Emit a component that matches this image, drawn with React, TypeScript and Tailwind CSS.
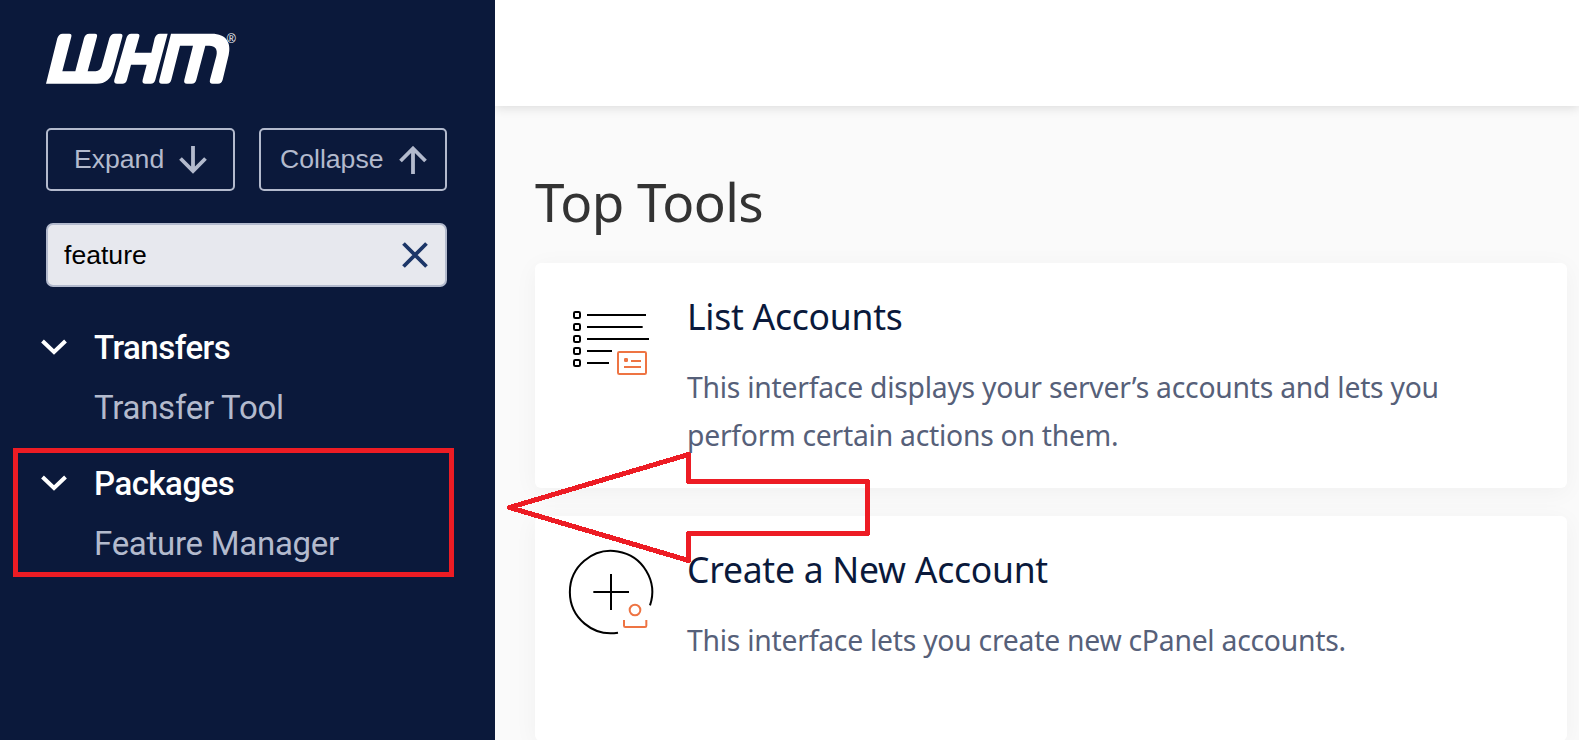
import type { ReactNode } from "react";

const menu = [
  { title: "Transfers", item: "Transfer Tool" },
  { title: "Packages", item: "Feature Manager" },
];

function Logo() {
  return (
    <svg
      className="h-[52px] w-[192px] overflow-visible"
      viewBox="48 40 576 156"
      fill="#fff"
      aria-label="WHM"
    >
      <path d="M48 192L82 56Q86 42 98 42H118Q126 42 124 51L97 155H136L162 56Q165 42 178 42H195Q203 42 201 51L173 155H197Q211 154 215 140L238 56Q242 42 254 42H271Q279 42 277 51L250 150C243 178 226 192 200 192Z" />
      <path d="M289 56Q292 42 304 42H322Q330 42 328 51L314 99H364L374 56Q378 42 390 42H413L376 180Q373 192 362 192H346Q335 192 338 180L350 135H303L291 180Q288 192 277 192H262Q250 192 253 180Z" />
      <path d="M423 42H545C590 42 604 70 596 106L578 180Q575 192 564 192H548Q537 192 540 180L559 109C564 88 555 78 538 78H526L499 180Q496 192 485 192H471Q460 192 463 180L489 78H450L424 180Q421 192 410 192H396Q385 192 388 180Z" />
      <text
        x="590"
        y="71"
        fontSize="37"
        fontFamily="Liberation Sans, sans-serif"
      >
        ®
      </text>
    </svg>
  );
}

function ListIcon() {
  const rights = [288, 278, 297, 186, 177];
  return (
    <svg className="mt-1.5 size-[84px] shrink-0" viewBox="57 21 252 252" fill="none">
      {rights.map((right, i) => (
        <g key={right} stroke="#000" strokeWidth="6">
          <rect x="72" y={66 + i * 36} width="18" height="18" rx="4" />
          <path d={`M111 ${75 + i * 36}H${right}`} />
        </g>
      ))}
      <g stroke="#ee7443" strokeWidth="6">
        <rect x="204" y="186" width="84" height="66" rx="4" />
        <path d="M243 213H273M222 231H273" />
      </g>
      <rect x="222" y="204" width="12" height="12" rx="4" fill="#ee7443" />
    </svg>
  );
}

function CreateIcon() {
  return (
    <svg
      className="mt-1.5 size-[84px] shrink-0 overflow-visible"
      viewBox="57 60 252 252"
      fill="none"
    >
      <g stroke="#000" strokeWidth="6">
        <path d="M204 308A123.5 123.5 0 1 1 300 226" />
        <path d="M130 186H237M183 132V240" />
      </g>
      <g stroke="#ee7443" strokeWidth="6">
        <circle cx="255" cy="240" r="16" />
        <path d="M222 270V287Q222 291 226 291H285Q289 291 289 287V270" />
      </g>
    </svg>
  );
}

function ToolCard({
  icon,
  title,
  children,
}: {
  icon: ReactNode;
  title: string;
  children: ReactNode;
}) {
  return (
    <div className="flex h-[225px] gap-[34px] rounded-[6px] bg-white px-[34px] pt-7 shadow-[0_4px_24px_rgba(0,20,10,0.045)]">
      {icon}
      <div>
        <h2 className="mt-px text-[35.5px] leading-[48px] tracking-[-0.25px] whitespace-nowrap text-[#0a193b]">
          {title}
        </h2>
        <p className="mt-[23px] text-[28.3px] leading-[48px] tracking-[-0.24px] whitespace-nowrap text-[#566079]">
          {children}
        </p>
      </div>
    </div>
  );
}

export default function App() {
  return (
    <div className="relative flex h-[740px] w-[1579px] overflow-hidden bg-[#fafafa]">
      <aside className="relative z-10 w-[495px] shrink-0 bg-[#0b193b] pt-[33px] pr-12 pl-[46px]">
        <Logo />
        <div className="mt-[43px] flex gap-6 font-['Liberation_Sans',sans-serif] text-[26.6px] text-[#b3bacd]">
          <button className="flex h-[63px] w-[189px] items-center rounded-[5px] border-2 border-[#b3bacd] pl-[26px]">
            <span>Expand</span>
            <svg className="ml-[15px] h-7 w-[28px]" viewBox="0 0 28 28" fill="none" stroke="currentColor" strokeWidth="3.8">
              <path d="M14 0V26M1.5 12.5L14 25L26.5 12.5" />
            </svg>
          </button>
          <button className="flex h-[63px] w-[188px] items-center rounded-[5px] border-2 border-[#b3bacd] pl-[19px]">
            <span>Collapse</span>
            <svg className="ml-4 h-7 w-[28px]" viewBox="0 0 28 28" fill="none" stroke="currentColor" strokeWidth="3.8">
              <path d="M14 28V2.5M1.5 15L14 2.5L26.5 15" />
            </svg>
          </button>
        </div>
        <div className="mt-8 flex h-16 items-center justify-between rounded-[7px] border-2 border-[#b3bacd] bg-[#e7e8ee] pr-[17px] pl-4 font-['Liberation_Sans',sans-serif] text-[26.6px] text-black">
          <span className="pt-0.5">feature</span>
          <svg className="size-[26px]" viewBox="0 0 26 26" fill="none" stroke="#1c3668" strokeWidth="3.8">
            <path d="M1.5 1.5L24.5 24.5M24.5 1.5L1.5 24.5" />
          </svg>
        </div>
        <nav className="mt-[31px] -ml-[5px] font-[Roboto,sans-serif] text-[33px]">
          {menu.map(({ title, item }) => (
            <div key={title} className="h-[136px] pl-[53px] leading-[60px]">
              <div className="-ml-[53px] flex items-center font-medium tracking-[-0.5px] text-white">
                <svg className="mr-[27px] mb-0.5 h-4 w-[26px]" viewBox="0 0 26 16" fill="none" stroke="currentColor" strokeWidth="4">
                  <path d="M1.5 2L13 13L24.5 2" />
                </svg>
                {title}
              </div>
              <div className="tracking-[-0.27px] text-[#b3bacd]">{item}</div>
            </div>
          ))}
        </nav>
      </aside>

      <main className="grow font-['Noto_Sans',sans-serif]">
        <header className="h-[106px] bg-white shadow-[0_2px_10px_rgba(0,0,0,0.12)]" />
        <div className="pt-[60px] pr-3 pl-10">
          <h1 className="mb-[25px] text-[53px] leading-[72px] tracking-[-0.55px] text-[#333]">
            Top Tools
          </h1>
          <div className="flex flex-col gap-7">
            <ToolCard icon={<ListIcon />} title="List Accounts">
              This interface displays your server’s accounts and lets you
              <br />
              perform certain actions on them.
            </ToolCard>
            <ToolCard icon={<CreateIcon />} title="Create a New Account">
              This interface lets you create new cPanel accounts.
            </ToolCard>
          </div>
        </div>
      </main>

      {/* callout over the Packages group */}
      <div className="absolute top-[448px] left-[13px] z-20 h-[129px] w-[441px] border-5 border-[#ed1c24]" />
      <svg
        className="absolute top-[448px] left-[500px] z-20 h-[120px] w-[380px]"
        viewBox="500 448 380 120"
        fill="none"
        stroke="#ed1c24"
        strokeWidth="5"
        strokeLinejoin="round"
        shapeRendering="crispEdges"
      >
        <path d="M509.5 507.5L688.5 454.5V481.5H867.5V533.5H688.5V560.5Z" />
      </svg>
    </div>
  );
}
